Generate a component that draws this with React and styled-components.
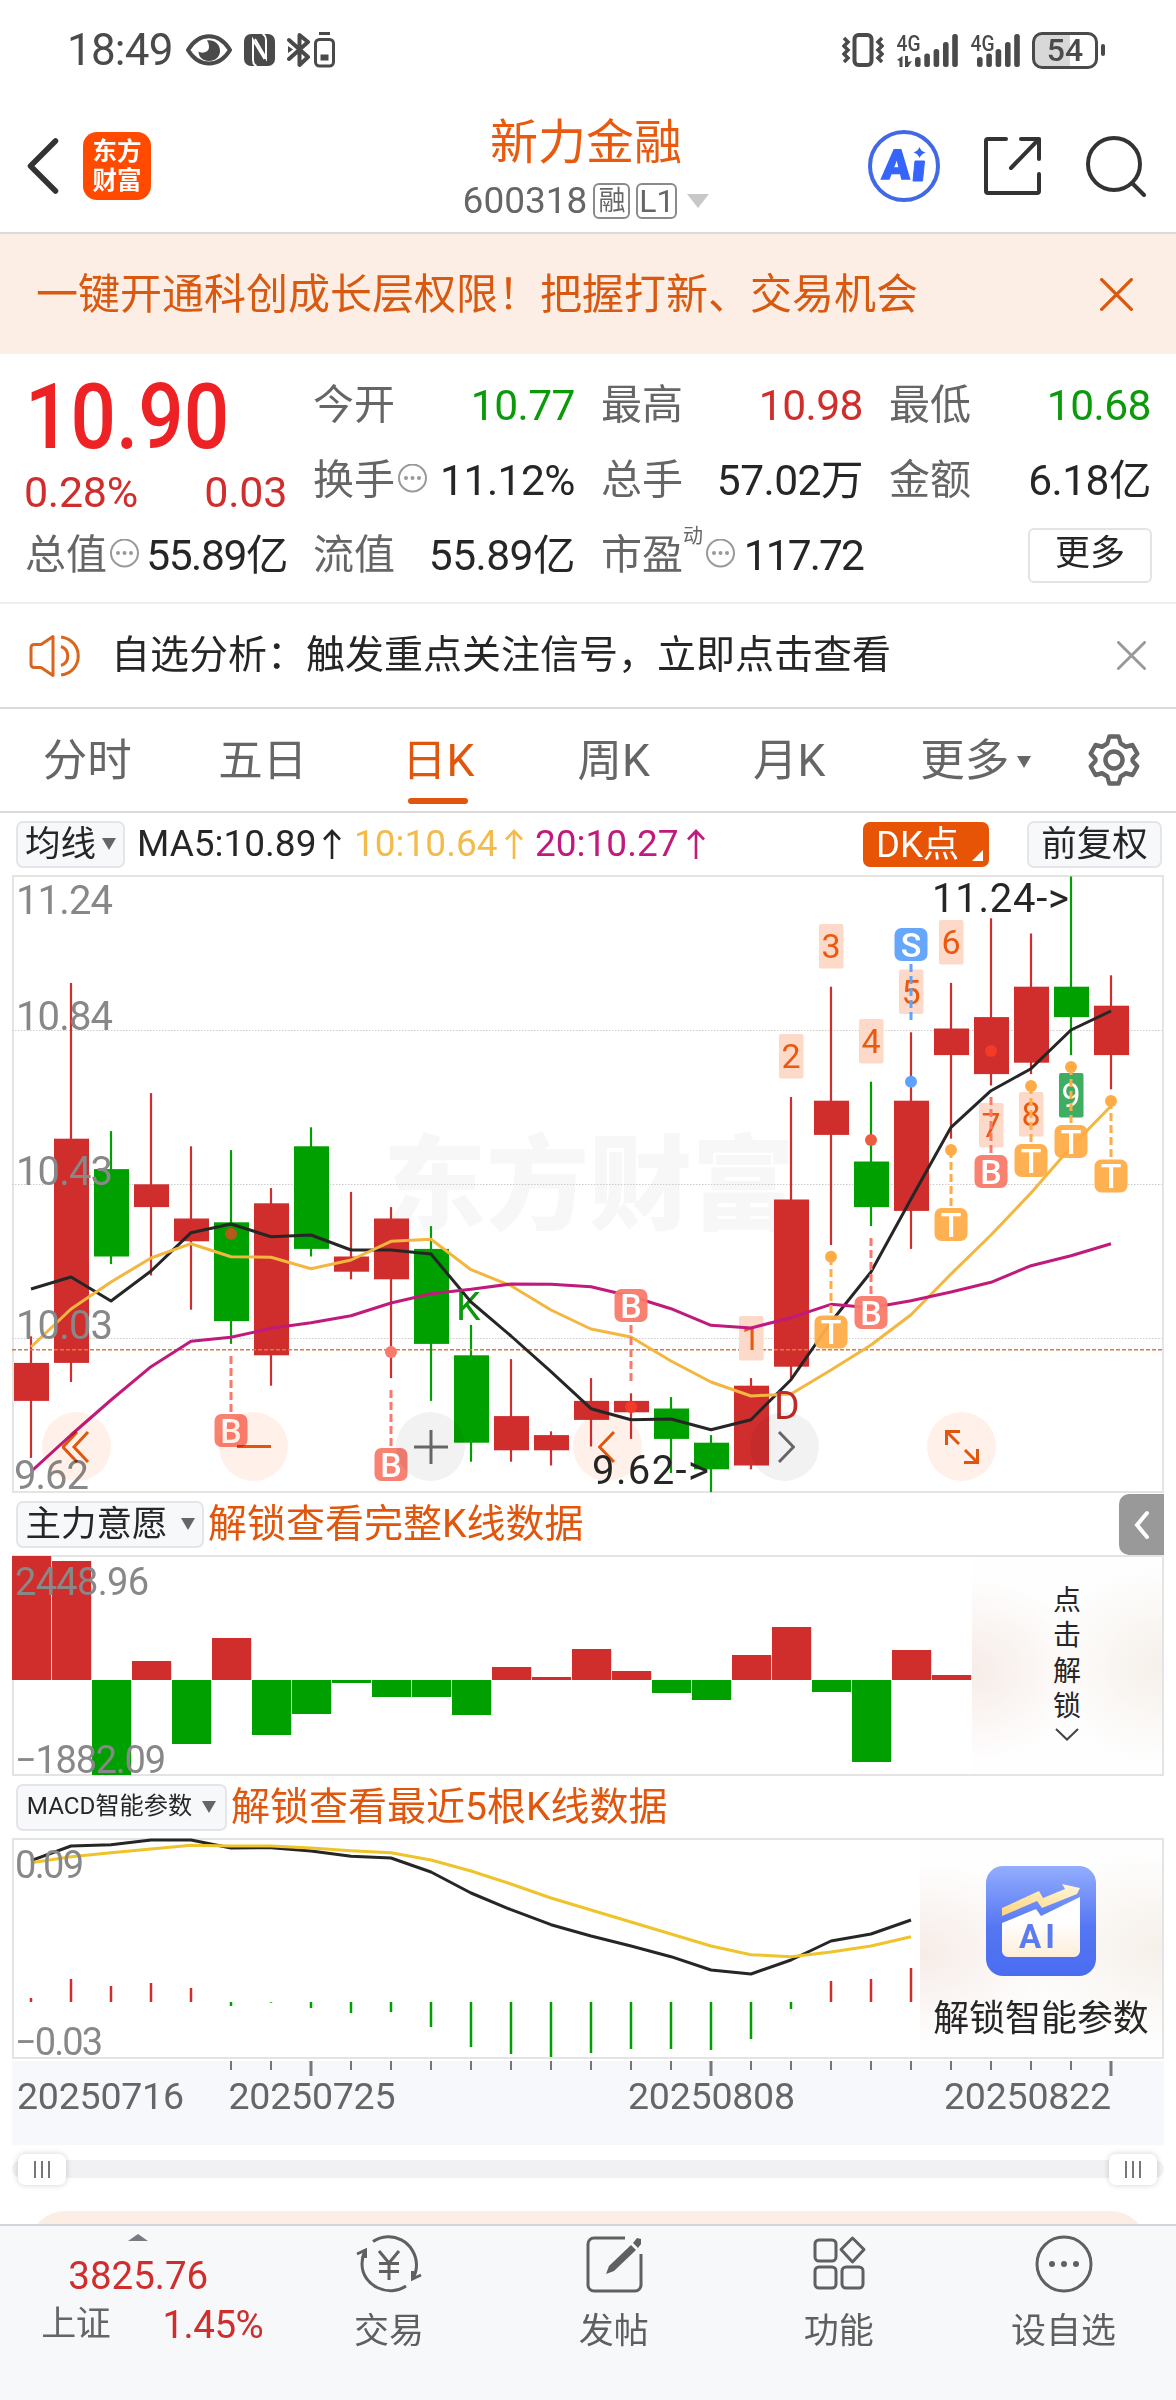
import React from 'react';
import styled, { createGlobalStyle } from 'styled-components';

const RED = '#d02d2d';
const GREEN = '#00a000';
const ORANGE = '#e0560c';

const GlobalStyle = createGlobalStyle`
  * {
    box-sizing: border-box;
  }

  body {
    margin: 0;
    background: #fff;
    color: #262626;
    font-family: Roboto, 'Noto Sans CJK SC', sans-serif;
    line-height: 1.2;
  }

  svg {
    display: block;
    flex: none;
  }
`;

const Page = styled.div`
  width: 1176px;
  height: 2400px;
  overflow: hidden;
  background: #fff;
`;

/* status bar */

const StatusBar = styled.div`
  height: 100px;
  padding: 0 71px 0 67px;
  display: flex;
  align-items: center;
  justify-content: space-between;
  color: #4a4a4a;
`;

const StatusGroup = styled.div`
  display: flex;
  align-items: center;
  gap: ${({ $gap }) => $gap}px;
`;

const Clock = styled.span`
  font-size: 44px;
  letter-spacing: -0.8px;
  margin-right: 1px;
`;

const Battery = styled.div`
  width: 66px;
  height: 37px;
  border: 3px solid #4a4a4a;
  border-radius: 10px;
  background: linear-gradient(90deg, #d8d8d8 58%, #fff 58%);
  display: flex;
  align-items: center;
  justify-content: center;
  font-size: 32px;
  font-weight: 500;
  line-height: 1;
`;

/* header */

const Header = styled.header`
  height: 134px;
  padding: 0 30px 0 26px;
  border-bottom: 2px solid #dadada;
  display: grid;
  grid-template-columns: 1fr auto 1fr;
  align-items: center;
`;

const HeaderSide = styled.div`
  display: flex;
  align-items: center;
  gap: ${({ $gap }) => $gap}px;
  justify-content: ${({ $end }) => ($end ? 'flex-end' : 'flex-start')};
`;

const Logo = styled.div`
  width: 68px;
  height: 68px;
  border-radius: 14px;
  background: #ff4a00;
  color: #fff;
  font-size: 24.5px;
  font-weight: 700;
  line-height: 29px;
  text-align: center;
  padding-top: 5px;
`;

const StockTitle = styled.div`
  padding-top: 10px;
  display: flex;
  flex-direction: column;
  align-items: center;
`;

const StockName = styled.h1`
  margin: 0;
  font-size: 48px;
  font-weight: 400;
  line-height: 60px;
  color: #ea5a0e;
`;

const StockCode = styled.div`
  display: flex;
  align-items: center;
  gap: 6px;
  height: 56px;
  font-size: 37px;
  color: #666;
`;

const Tag = styled.span`
  height: 36px;
  width: ${({ $w }) => $w}px;
  border: 2px solid #8a8a8a;
  border-radius: 6px;
  font-size: ${({ $size }) => $size}px;
  line-height: 32px;
  text-align: center;
`;

const Caret = styled.span`
  width: 0;
  height: 0;
  border-left: ${({ $w }) => $w / 2}px solid transparent;
  border-right: ${({ $w }) => $w / 2}px solid transparent;
  border-top: ${({ $h }) => $h}px solid ${({ $color }) => $color || '#666'};
`;

/* promotion */

const Banner = styled.div`
  height: 120px;
  padding: 0 43px 0 36px;
  background: #fceee5;
  color: #d8590f;
  font-size: 42px;
  display: flex;
  align-items: center;
  justify-content: space-between;

  span {
    padding-top: 2px;
  }
`;

/* quote */

const Quote = styled.section`
  height: 250px;
  padding: 14px 25px 0;
  border-bottom: 2px solid #eee;
  display: grid;
  grid-template-columns: repeat(4, 262px);
  grid-template-rows: repeat(3, 75px);
  column-gap: 26px;
`;

const PriceBox = styled.div`
  grid-row: span 2;
  padding-top: 1px;
  color: ${RED};
  display: flex;
  flex-direction: column;
`;

const Price = styled.div`
  height: 97px;
  line-height: 98px;
  font-size: 90px;
  font-weight: 500;
  color: #ee2224;
  transform: scaleX(0.89);
  transform-origin: 0 50%;
`;

const Changes = styled.div`
  display: flex;
  justify-content: space-between;
  font-size: 43px;
  line-height: 52px;
  letter-spacing: -0.3px;
  margin-left: -1px;
`;

const Stat = styled.div`
  display: flex;
  align-items: center;
  white-space: nowrap;
  font-size: 41px;
`;

const StatLabel = styled.span`
  color: #666;
`;

const Sup = styled.sup`
  align-self: flex-start;
  font-size: 20px;
  line-height: 20px;
  margin-top: 8px;
  color: #666;
`;

const StatValue = styled.span`
  margin-left: auto;
  font-size: 42.5px;
  letter-spacing: ${({ $spacing }) => $spacing || -0.5}px;
  color: ${({ $color }) => $color || '#262626'};
`;

const MoreButton = styled.button`
  margin-left: auto;
  margin-right: -1px;
  width: 124px;
  height: 55px;
  padding: 0 0 4px;
  border: 2px solid #e4e4e4;
  border-radius: 6px;
  background: #fff;
  color: #262626;
  font: inherit;
  font-size: 35px;
  line-height: 1;
`;

/* watchlist analysis */

const Notice = styled.div`
  height: 105px;
  padding: 0 30px 0 29px;
  border-bottom: 2px solid #dadada;
  display: flex;
  align-items: center;
  font-size: 39px;

  span {
    margin-left: 30px;
    flex: 1;
  }
`;

/* tabs */

const Tabs = styled.nav`
  height: 104px;
  border-bottom: 2px solid #dadada;
  display: flex;
  align-items: stretch;
`;

const Tab = styled.div`
  width: 175.5px;
  display: flex;
  align-items: center;
  justify-content: center;
  gap: 8px;
  font-size: 44.5px;
  color: ${({ $active }) => ($active ? ORANGE : '#666')};
  position: relative;
  padding-top: 3px;
  padding-left: ${({ $indent }) => $indent || 0}px;
  padding-right: ${({ $indent }) => ($indent ? 0 : 1)}px;

  &::after {
    content: '';
    display: ${({ $active }) => ($active ? 'block' : 'none')};
    position: absolute;
    bottom: 7px;
    width: 60px;
    height: 6px;
    border-radius: 3px;
    background: ${ORANGE};
  }
`;

const Settings = styled.div`
  display: flex;
  align-items: center;
  margin-left: 35px;
`;

/* indicator rows */

const IndicatorRow = styled.div`
  height: 62px;
  padding: 0 14px 0 16px;
  display: flex;
  align-items: center;
  position: relative;
`;

const Chip = styled.div`
  height: 47px;
  width: ${({ $w }) => $w}px;
  border: 2px solid #e3e5ea;
  border-radius: 7px;
  background: #f7f8fa;
  display: flex;
  align-items: center;
  justify-content: center;
  gap: ${({ $gap }) => $gap || 0}px;
  font-size: ${({ $size }) => $size || 35.5}px;
  white-space: nowrap;
`;

const MaText = styled.span`
  margin-left: ${({ $left }) => $left}px;
  width: ${({ $w }) => $w}px;
  color: ${({ $color }) => $color};
  font-size: 37px;
  white-space: nowrap;
  display: flex;
  align-items: center;
  justify-content: space-between;
`;

const DkButton = styled.div`
  margin-left: auto;
  margin-right: 38px;
  width: 126px;
  height: 45px;
  padding: 0 6px 6px 13px;
  border-radius: 7px;
  background: #e85405;
  color: #fff;
  font-size: 36.5px;
  line-height: 42px;
  display: flex;
  align-items: flex-end;
  justify-content: space-between;

  span {
    height: 37px;
  }
`;

const Corner = styled.i`
  width: 0;
  height: 0;
  border-left: 11px solid transparent;
  border-bottom: 11px solid #fff;
`;

const UnlockText = styled.span`
  margin-left: 4px;
  color: #e0560c;
  font-size: 39px;
  white-space: nowrap;
`;

const SideHandle = styled.div`
  position: absolute;
  right: 12px;
  top: 1px;
  width: 45px;
  height: 61px;
  border-radius: 10px 0 0 10px;
  background: #999;
  display: flex;
  align-items: center;
  justify-content: center;
`;

/* charts */

const ChartBox = styled.div`
  position: relative;
  height: ${({ $height }) => $height}px;
  margin: 0 12px;
  border: 2px solid #e4e4e4;

  > svg {
    margin: -2px;
    overflow: visible;
  }
`;

const ChartTools = styled.div`
  position: absolute;
  left: 28px;
  bottom: 10px;
  display: flex;
  gap: 108px;
  mix-blend-mode: multiply;
`;

const RoundButton = styled.div`
  width: 69px;
  height: 69px;
  border-radius: 50%;
  background: ${({ $gray }) => ($gray ? '#f2f2f2' : '#fff1ea')};
  display: flex;
  align-items: center;
  justify-content: center;
`;

const UnlockPanel = styled.div`
  position: absolute;
  top: 0;
  right: 0;
  bottom: 0;
  width: ${({ $w }) => $w}px;
  background:
    radial-gradient(ellipse 60% 42% at 0 52%, rgba(246, 234, 229, 0.9), rgba(255, 255, 255, 0) 100%),
    radial-gradient(ellipse 60% 45% at 100% 50%, rgba(244, 236, 228, 0.8), rgba(255, 255, 255, 0) 100%),
    #fefefe;
  display: flex;
  flex-direction: column;
  align-items: center;
`;

const VerticalText = styled.div`
  width: 28px;
  margin: 26px 0 4px;
  font-size: 28px;
  line-height: 35.3px;
  text-align: center;
`;

const PanelCaption = styled.div`
  margin-top: 18px;
  font-size: 35.9px;
  line-height: 50px;
  white-space: nowrap;
`;

const AiTile = styled.div`
  margin-top: 26px;
`;

const AxisBox = styled.div`
  margin: 2px 12px 0;
  height: 84px;
  background: #f7f8fb;
`;

/* range slider */

const Slider = styled.div`
  margin: 15px 12px 0;
  height: 18px;
  border-radius: 9px;
  background: #f1f1f3;
  padding: 0 7px 0 6px;
  display: flex;
  align-items: center;
  justify-content: space-between;
`;

const Handle = styled.div`
  width: 48px;
  height: 31px;
  border-radius: 7px;
  background: #fff;
  box-shadow: 0 0 6px rgba(0, 0, 0, 0.18);
  display: flex;
  align-items: center;
  justify-content: center;
  gap: 5px;

  i {
    width: 2px;
    height: 17px;
    background: #777;
  }
`;

const NextCard = styled.div`
  height: 13px;
  margin: 33px 29px 0;
  overflow: hidden;

  &::before {
    content: '';
    display: block;
    height: 80px;
    border-radius: 36px;
    background: #fceee5;
  }
`;

/* bottom bar */

const BottomBar = styled.footer`
  height: 176px;
  border-top: 2px solid #d3d5dc;
  background: #f7f8fa;
  display: flex;
`;

const IndexBox = styled.div`
  width: 277px;
  padding-top: 8px;
  display: flex;
  flex-direction: column;
  align-items: center;
  color: ${RED};
  font-size: 38.5px;
`;

const UpCaret = styled.i`
  border-left: 10px solid transparent;
  border-right: 10px solid transparent;
  border-bottom: 7px solid #7a7a80;
`;

const IndexValue = styled.div`
  margin-top: 13px;
  line-height: 44px;
`;

const IndexRow = styled.div`
  width: 222px;
  margin-top: 4px;
  margin-left: 28px;
  display: flex;
  align-items: center;
  justify-content: space-between;
  letter-spacing: -0.5px;

  span {
    color: #666;
    font-size: 35px;
  }
`;

const NavItem = styled.div`
  width: 225.3px;
  padding-top: 8px;
  display: flex;
  flex-direction: column;
  align-items: center;
  color: #5f5f5f;
  font-size: 35px;
  line-height: 50px;

  &:first-of-type {
    margin-left: -2px;
  }

  svg {
    margin-bottom: 13px;
  }
`;

const CloseIcon = ({ size, color, width = 3 }) => (
  <svg width={size} height={size} viewBox="0 0 30 30" stroke={color} strokeWidth={width} strokeLinecap="round">
    <path d="M1.5 1.5L28.5 28.5M28.5 1.5L1.5 28.5" />
  </svg>
);

const InfoIcon = () => (
  <svg width="32" height="34" viewBox="0 0 32 34" fill="none" stroke="#999" strokeWidth="2">
    <circle cx="17.5" cy="14" r="13.5" />
    <g fill="#999" stroke="none">
      <circle cx="11" cy="14" r="2" />
      <circle cx="17.5" cy="14" r="2" />
      <circle cx="24" cy="14" r="2" />
    </g>
  </svg>
);

const ArrowUp = () => (
  <svg width="18" height="30" viewBox="0 0 18 30" fill="none" stroke="currentColor" strokeWidth="2.6">
    <path d="M9 30V2M1 10.5L9 2l8 8.5" />
  </svg>
);

const SignalIcon = ({ arrows }) => (
  <svg width={arrows ? 62 : 50} height="46" viewBox={arrows ? '0 -5 62 46' : '12 -5 50 46'} fill="#4a4a4a">
    <text
      x={arrows ? 0.5 : 12.5}
      y="19"
      fontFamily="Roboto"
      fontWeight="500"
      fontSize="22.5"
      textLength="24"
      lengthAdjust="spacingAndGlyphs"
    >
      4G
    </text>
    {arrows && (
      <path d="M1 28L6.5 24v11H3.5v-6zM9 24h3v6l4-1-4 6H9z" />
    )}
    <rect x="19" y="25" width="5.6" height="10" rx="2.5" />
    <rect x="28.3" y="21.5" width="5.6" height="13.5" rx="2.5" />
    <rect x="37.6" y="17" width="5.6" height="18" rx="2.5" />
    <rect x="47" y="10" width="5.6" height="25" rx="2.5" />
    <rect x="56.2" y="2" width="5.6" height="33" rx="2.5" />
  </svg>
);

const Status = () => (
  <StatusBar>
    <StatusGroup $gap={12}>
      <Clock>18:49</Clock>
      <svg width="46" height="34" viewBox="0 0 46 34">
        <path d="M2 17C8 7 15 3.2 23 3.2S38 7 44 17C38 27 31 30.5 23 30.5S8 27 2 17z" fill="none" stroke="#4a4a4a" strokeWidth="4" />
        <path d="M21 7.5c7-1 13 3.5 13 10.5C34 24 29 28 23 28s-10.5-4-10.5-9.5c3 2.5 11 1 10.5-5-.2-3-1-4.5-2-6z" fill="#4a4a4a" />
      </svg>
      <svg width="31" height="32" viewBox="0 0 31 32">
        <rect width="31" height="32" rx="7" fill="#4a4a4a" />
        <path d="M12.5 32c-2.5-1-3.5-3-3.5-6V6l11.5 19M18.5 0c2.5 1 3.5 3 3.5 6v18L11 5" fill="none" stroke="#fff" strokeWidth="2" />
      </svg>
      <svg width="48" height="36" viewBox="0 0 48 36" fill="none" stroke="#4a4a4a" strokeWidth="4">
        <path d="M2 8l19 17-8.5 8V3L21 10 2 27" strokeLinejoin="round" strokeLinecap="round" />
        <path d="M1 14l5 3.5-5 3.5z" fill="#4a4a4a" stroke="none" />
        <rect x="28.5" y="7.5" width="18" height="26.5" rx="4" strokeWidth="3" />
        <path d="M32 1.5h11" strokeWidth="3" />
        <rect x="33.5" y="22.5" width="8" height="6" fill="#4a4a4a" stroke="none" />
      </svg>
    </StatusGroup>
    <StatusGroup $gap={12}>
      <svg width="42" height="36" viewBox="0 0 42 36" fill="none" stroke="#4a4a4a" strokeWidth="4">
        <rect x="12.5" y="3" width="17" height="30" rx="4" />
        <path d="M2 6l4 4-4 4 4 4-4 4 4 4-4 4M40 6l-4 4 4 4-4 4 4 4-4 4 4 4" strokeWidth="3.5" />
      </svg>
      <SignalIcon arrows />
      <SignalIcon />
      <StatusGroup $gap={3}>
        <Battery>54</Battery>
        <svg width="4" height="12" viewBox="0 0 4 12">
          <rect width="4" height="12" rx="2" fill="#4a4a4a" />
        </svg>
      </StatusGroup>
    </StatusGroup>
  </StatusBar>
);

const TopHeader = () => (
  <Header>
    <HeaderSide $gap={24}>
      <svg width="33" height="56" viewBox="0 0 33 56" fill="none" stroke="#333" strokeWidth="5.5" strokeLinecap="round" strokeLinejoin="round">
        <path d="M29.5 3L4.5 28l25 25" />
      </svg>
      <Logo>
        东方
        <br />
        财富
      </Logo>
    </HeaderSide>
    <StockTitle>
      <StockName>新力金融</StockName>
      <StockCode>
        600318
        <Tag $size={27} $w={37}>融</Tag>
        <Tag $size={32} $w={41}>L1</Tag>
        <Caret $w={22} $h={14} $color="#c8c8c8" style={{ marginLeft: 4 }} />
      </StockCode>
    </StockTitle>
    <HeaderSide $end $gap={43}>
      <svg width="72" height="72" viewBox="0 0 72 72">
        <circle cx="36" cy="36" r="34" fill="none" stroke="#4169e6" strokeWidth="4" />
        <text x="14" y="49" fontFamily="Roboto" fontSize="41" fontWeight="900" fill="#3565fa" stroke="#3565fa" strokeWidth="1.5" transform="skewX(-4) translate(3 0)">
          A
        </text>
        <path d="M47 31h9.5l-2 20h-9.5z" fill="#3565fa" stroke="#3565fa" strokeLinejoin="round" />
        <path d="M51.5 17q1.5 4.5 6 5.5-4.5 1.5-6 5.5-1.5-4.5-6-5.5 4.5-1.5 6-5.5z" fill="#3565fa" />
      </svg>
      <svg width="60" height="60" viewBox="0 0 60 60" fill="none" stroke="#333" strokeWidth="4" strokeLinecap="round" strokeLinejoin="round">
        <path d="M23 3H5a2 2 0 0 0-2 2v50a2 2 0 0 0 2 2h49a2 2 0 0 0 2-2V38M38 3h18v20M56 3L28 32" />
      </svg>
      <svg width="60" height="62" viewBox="0 0 60 62" fill="none" stroke="#333" strokeWidth="4" strokeLinecap="round">
        <circle cx="28" cy="29" r="26" />
        <path d="M46 48l12 12" />
      </svg>
    </HeaderSide>
  </Header>
);

const QuotePanel = () => (
  <Quote>
    <PriceBox>
      <Price>10.90</Price>
      <Changes>
        <span>0.28%</span>
        <span>0.03</span>
      </Changes>
    </PriceBox>
    <Stat>
      <StatLabel>今开</StatLabel>
      <StatValue $color="#0a9a0a">10.77</StatValue>
    </Stat>
    <Stat>
      <StatLabel>最高</StatLabel>
      <StatValue $color={RED}>10.98</StatValue>
    </Stat>
    <Stat>
      <StatLabel>最低</StatLabel>
      <StatValue $color="#0a9a0a">10.68</StatValue>
    </Stat>
    <Stat>
      <StatLabel>换手</StatLabel>
      <InfoIcon />
      <StatValue>11.12%</StatValue>
    </Stat>
    <Stat>
      <StatLabel>总手</StatLabel>
      <StatValue>57.02万</StatValue>
    </Stat>
    <Stat>
      <StatLabel>金额</StatLabel>
      <StatValue>6.18亿</StatValue>
    </Stat>
    <Stat>
      <StatLabel>总值</StatLabel>
      <InfoIcon />
      <StatValue $spacing={-1.4}>55.89亿</StatValue>
    </Stat>
    <Stat>
      <StatLabel>流值</StatLabel>
      <StatValue>55.89亿</StatValue>
    </Stat>
    <Stat>
      <StatLabel>市盈</StatLabel>
      <Sup>动</Sup>
      <InfoIcon />
      <StatValue $spacing={-1.9}>117.72</StatValue>
    </Stat>
    <Stat>
      <MoreButton>更多</MoreButton>
    </Stat>
  </Quote>
);

/* [up, top of body, bottom of body, high, low] */
const candles = [
  [1, 9.96, 9.86, 10.03, 9.71],
  [1, 10.55, 9.96, 10.96, 9.91],
  [0, 10.47, 10.24, 10.57, 10.22],
  [1, 10.43, 10.37, 10.67, 10.19],
  [1, 10.34, 10.28, 10.53, 10.1],
  [0, 10.33, 10.07, 10.52, 10.01],
  [1, 10.38, 9.98, 10.42, 9.9],
  [0, 10.53, 10.26, 10.58, 10.24],
  [1, 10.24, 10.2, 10.41, 10.18],
  [1, 10.34, 10.18, 10.37, 9.92],
  [0, 10.26, 10.01, 10.32, 9.86],
  [0, 9.98, 9.75, 10.06, 9.7],
  [1, 9.82, 9.73, 9.97, 9.7],
  [1, 9.77, 9.73, 9.78, 9.69],
  [1, 9.86, 9.81, 9.92, 9.74],
  [1, 9.86, 9.83, 9.88, 9.76],
  [0, 9.84, 9.76, 9.87, 9.67],
  [0, 9.75, 9.68, 9.77, 9.62],
  [1, 9.9, 9.69, 9.92, 9.68],
  [1, 10.39, 9.95, 10.66, 9.92],
  [1, 10.65, 10.56, 10.95, 10.27],
  [0, 10.49, 10.37, 10.7, 10.32],
  [1, 10.65, 10.36, 10.83, 10.26],
  [1, 10.84, 10.77, 10.96, 10.55],
  [1, 10.87, 10.72, 11.13, 10.69],
  [1, 10.95, 10.75, 11.09, 10.72],
  [0, 10.95, 10.87, 11.24, 10.77],
  [1, 10.9, 10.77, 10.98, 10.68],
];

const ma5 = [
  413, 401, 425, 395, 356.7, 348, 360.7, 359, 374, 374, 378, 426, 460, 495.7, 532.7, 543.7, 543, 553.7, 543.7,
  503.7, 446, 396, 323, 251.3, 214.7, 192.7, 154, 135,
];
const ma10 = [
  471, 433, 406, 382, 367.7, 380.7, 381.3, 392.7, 384, 365.3, 363.3, 393.7, 409.7, 434, 453, 461, 485, 506, 520,
  518, 494, 469, 438.7, 398, 359, 317, 271, 230,
];
const ma20 = [
  595.7, 559, 524, 490.7, 465.3, 461.3, 452.3, 446.7, 439.7, 427, 417.7, 413.3, 408, 408.3, 410.7, 420.3, 432.7,
  449.3, 452, 441.7, 428.3, 431.7, 424.7, 416, 406.3, 389.7, 379.7, 367.7,
];

const signalColors = { B: '#f97a6a', T: '#ffac47', S: '#5fa2fb' };

/* day index, letter, badge top, dashed line from/to, dot */
const signals = [
  { i: 5, type: 'B', top: 538, line: [480, 537], dot: 357.7, dotColor: '#b55a1c' },
  { i: 9, type: 'B', top: 572, line: [514, 571], dot: 476 },
  { i: 15, type: 'B', top: 413, line: [449, 506], dot: 531, dotColor: '#f43a28' },
  { i: 20, type: 'T', top: 439.5, line: [381, 438], dot: 380.7 },
  { i: 21, type: 'B', top: 420, line: [362, 419], dot: 264, dotColor: '#ee5a42' },
  { i: 22, type: 'S', top: 52, line: [88, 145], dot: 205.7 },
  { i: 23, type: 'T', top: 332, line: [274, 331], dot: 274 },
  { i: 24, type: 'B', top: 279, line: [221, 278], dot: 175, dotColor: '#f43a28' },
  { i: 25, type: 'T', top: 268, line: [210, 267], dot: 210 },
  { i: 26, type: 'T', top: 249, line: [191, 248], dot: 191 },
  { i: 27, type: 'T', top: 283.5, line: [225, 282], dot: 225 },
];

const counts = [
  [18, 1, 440],
  [19, 2, 158],
  [20, 3, 48],
  [21, 4, 143],
  [22, 5, 93.5],
  [23, 6, 44],
  [24, 7, 227],
  [25, 8, 216],
  [26, 9, 197],
];

const cx = (i) => 19 + i * 40;
const priceY = (p) => 0.5 + (11.24 - p) * 380;
const toPoints = (values) => values.map((v, i) => `${cx(i)},${v}`).join(' ');

const ChartLabel = styled.text`
  font-family: Roboto, sans-serif;
  font-size: ${({ $size }) => $size || 38}px;
  fill: ${({ $fill }) => $fill || '#888'};
`;

const KLine = () => (
  <ChartBox $height={618}>
    <svg width="1152" height="618" viewBox="0 -1 1152 618">
      <text x="371" y="346" fontFamily="Noto Sans CJK SC" fontWeight="900" fontSize="103" fill="#f7f7f7" textLength="412">
        东方财富
      </text>
      {[154.5, 308.5, 462.5].map((y) => (
        <path key={y} d={`M0 ${y}H1150`} stroke="#ccc" strokeDasharray="1.5 1.5" />
      ))}
      {candles.map(([up, top, bottom, high, low], i) => (
        <g key={i} fill={up ? RED : GREEN} stroke={up ? RED : GREEN}>
          <path d={`M${cx(i)} ${priceY(high)}V${priceY(low)}`} strokeWidth="2.2" />
          <rect x={cx(i) - 17} y={priceY(top)} width="35" height={priceY(bottom) - priceY(top)} stroke="none" />
        </g>
      ))}
      <path d="M0 473.7H1150" stroke="#d97a45" strokeWidth="1.5" strokeDasharray="4 2" />
      {counts.map(([i, n, top]) => (
        <g key={n}>
          <rect x={cx(i) - 12} y={top} width="24.5" height="44.5" rx="2" fill={n === 9 ? '#3fae62' : '#fdd9ca'} />
          <ChartLabel x={cx(i)} y={top + 34} $size={34} $fill={n === 9 ? '#fff' : '#ea5a0e'} textAnchor="middle">
            {n}
          </ChartLabel>
        </g>
      ))}
      <ChartLabel x="444" y="444" $size={39} $fill="#0a9a0a">K</ChartLabel>
      <g fill="none" strokeWidth="3" strokeLinejoin="round">
        <polyline points={toPoints(ma5)} stroke="#262626" />
        <polyline points={toPoints(ma10)} stroke="#f3b63f" />
        <polyline points={toPoints(ma20)} stroke="#c01a7c" />
      </g>
      <ChartLabel x="762" y="543" $size={39} $fill="#c02a2a">D</ChartLabel>
      {signals.map(({ i, type, top, line, dot, dotColor }) => (
        <g key={i}>
          <path
            d={`M${cx(i)} ${line[0]}V${line[1]}`}
            stroke={signalColors[type]}
            strokeWidth="3"
            strokeDasharray="8 4"
          />
          <circle cx={cx(i)} cy={dot} r="6" fill={dotColor || signalColors[type]} />
          <rect x={cx(i) - 16.5} y={top} width="33" height="33" rx="7" fill={signalColors[type]} fillOpacity="0.95" />
          <ChartLabel x={cx(i)} y={top + 28.5} $size={34} $fill="#fff" fontWeight="500" textAnchor="middle">
            {type}
          </ChartLabel>
        </g>
      ))}
      {[
        ['11.24', 38],
        ['10.84', 154],
        ['10.43', 309],
        ['10.03', 463],
      ].map(([label, y]) => (
        <ChartLabel key={label} x="4" y={y} $size={40} textLength="97">
          {label}
        </ChartLabel>
      ))}
      <ChartLabel x="2" y="613" $size={40} textLength="75">9.62</ChartLabel>
      <ChartLabel x="920" y="36" $size={40} $fill="#262626" textLength="137">11.24-&gt;</ChartLabel>
      <ChartLabel x="580" y="608" $size={40} $fill="#262626" textLength="117">9.62-&gt;</ChartLabel>
    </svg>
    <ChartTools>
      <RoundButton>
        <svg width="30" height="34" viewBox="0 0 30 34" fill="none" stroke={ORANGE} strokeWidth="3">
          <path d="M15 2L1 17l14 15M26 2L12 17l14 15" />
        </svg>
      </RoundButton>
      <RoundButton>
        <svg width="34" height="4" viewBox="0 0 34 4">
          <rect width="34" height="3" fill={ORANGE} />
        </svg>
      </RoundButton>
      <RoundButton $gray>
        <svg width="34" height="34" viewBox="0 0 34 34" stroke="#666" strokeWidth="3">
          <path d="M0 17h34M17 0v34" />
        </svg>
      </RoundButton>
      <RoundButton>
        <svg width="20" height="34" viewBox="0 0 20 34" fill="none" stroke={ORANGE} strokeWidth="3">
          <path d="M16 2L1.5 17 16 32" />
        </svg>
      </RoundButton>
      <RoundButton $gray>
        <svg width="20" height="34" viewBox="0 0 20 34" fill="none" stroke="#666" strokeWidth="3">
          <path d="M4 2l14.5 15L4 32" />
        </svg>
      </RoundButton>
      <RoundButton>
        <svg width="34" height="34" viewBox="0 0 34 34" fill="none" stroke={ORANGE} strokeWidth="3">
          <path d="M1.5 15V1.5H15M1.5 1.5L14 14M32.5 19v13.5H19M32.5 32.5L20 20" />
        </svg>
      </RoundButton>
    </ChartTools>
  </ChartBox>
);

/* bar heights, positive above the axis */
const forceBars = [
  124, 119, -95, 19, -64, 42, -55, -34, -3, -17, -17, -35, 13, 3, 31, 9, -13, -20, 25, 53, -12, -82, 30, 5,
];

const ForceChart = () => (
  <ChartBox $height={221}>
    <svg width="1152" height="221" viewBox="0 0 1152 221">
      {forceBars.map((v, i) => (
        <rect
          key={i}
          x={i * 40}
          y={v > 0 ? 125 - v : 125}
          width="39.2"
          height={Math.abs(v)}
          fill={v > 0 ? RED : GREEN}
        />
      ))}
      <ChartLabel x="3" y="39.5" textLength="134">2448.96</ChartLabel>
      <ChartLabel x="3" y="218" textLength="151">−1882.09</ChartLabel>
    </svg>
    <UnlockPanel $w={190}>
      <VerticalText>点击解锁</VerticalText>
      <svg width="24" height="13" viewBox="0 0 24 13" fill="none" stroke="#444" strokeWidth="2">
        <path d="M1 1l11 10.5L23 1" />
      </svg>
    </UnlockPanel>
  </ChartBox>
);

const dif = [
  22.7, 8, 6.7, 2, 2, 10, 9.7, 13, 18.3, 20, 34, 55, 71.7, 86.7, 98, 108, 118.7, 132, 136, 122, 103, 96, 82,
];
const dea = [
  24.7, 18.7, 14.7, 11, 7.3, 8, 8, 10, 12.7, 14.7, 22, 33, 46, 60, 72, 84, 96, 108, 116.7, 118.7, 114, 108, 98.7,
];
const macd = [
  -4, -23, -16, -19, -14, 4, 0.7, 6, 11, 10, 25, 45, 52, 55, 51, 47, 47, 48, 37, 7, -21, -23, -34,
];

const MacdChart = () => (
  <ChartBox $height={221}>
    <svg width="1152" height="221" viewBox="0 0 1152 221">
      {macd.map((v, i) => (
        <path key={i} d={`M${cx(i)} 164v${v}`} stroke={v < 0 ? RED : GREEN} strokeWidth="2.5" />
      ))}
      <g fill="none" strokeWidth="3" strokeLinejoin="round">
        <polyline points={toPoints(dif)} stroke="#262626" />
        <polyline points={toPoints(dea)} stroke="#efc32a" />
      </g>
      <ChartLabel x="3" y="39.5" textLength="69">0.09</ChartLabel>
      <ChartLabel x="3" y="216.5" textLength="88">−0.03</ChartLabel>
    </svg>
    <UnlockPanel $w={242}>
      <AiTile>
        <svg width="110" height="110" viewBox="0 0 110 110">
          <defs>
            <linearGradient id="tile" x1="0" y1="0" x2="0" y2="1">
              <stop offset="0" stopColor="#93adfd" />
              <stop offset="0.55" stopColor="#5577f3" />
              <stop offset="1" stopColor="#4a6cf0" />
            </linearGradient>
            <linearGradient id="sheet" x1="0" y1="0" x2="0" y2="1">
              <stop offset="0.4" stopColor="#fff" />
              <stop offset="1" stopColor="#fdeeda" />
            </linearGradient>
            <linearGradient id="trend" x1="0" y1="1" x2="1" y2="0">
              <stop offset="0" stopColor="#ffd57a" />
              <stop offset="1" stopColor="#fff6dd" />
            </linearGradient>
          </defs>
          <rect width="110" height="110" rx="17" fill="url(#tile)" />
          <path d="M16 57l34-14 5 7 39-19v54a6 6 0 0 1-6 6H22a6 6 0 0 1-6-6z" fill="url(#sheet)" />
          <path d="M16 50v-8l37-17 4 7 22-9-3-5 18 4-3 6-35 14-5-7z" fill="url(#trend)" />
          <text x="33" y="82" fontFamily="Roboto" fontWeight="700" fontSize="33" fill="#5b7bf0" letterSpacing="4">
            AI
          </text>
        </svg>
      </AiTile>
      <PanelCaption>解锁智能参数</PanelCaption>
    </UnlockPanel>
  </ChartBox>
);

const dates = [
  ['20250716', 5],
  ['20250725', 216.5],
  ['20250808', 616],
  ['20250822', 932],
];

const DateAxis = () => (
  <AxisBox>
    <svg width="1152" height="84" viewBox="0 0 1152 84">
      {candles.map((_, i) => {
        if (i < 5) return null;
        const major = i % 10 === 7;
        return <path key={i} d={`M${cx(i)} 0v${major ? 15 : 9}`} stroke="#777" strokeWidth={major ? 3 : 2} />;
      })}
      {dates.map(([label, x]) => (
        <ChartLabel key={label} x={x} y="48" $size={37.5} $fill="#666" textLength="167">
          {label}
        </ChartLabel>
      ))}
    </svg>
  </AxisBox>
);

const App = () => {
  return (
    <>
      <GlobalStyle />
      <Page>
        <Status />
        <TopHeader />
        <Banner>
          <span>一键开通科创成长层权限！把握打新、交易机会</span>
          <CloseIcon size={33} color="#d8590f" />
        </Banner>
        <QuotePanel />
        <Notice>
          <svg width="52" height="44" viewBox="0 0 52 44" fill="none" stroke="#d9661f" strokeWidth="3" strokeLinejoin="round">
            <path d="M24 2.5L12 10.5H5a3 3 0 0 0-3 3v17a3 3 0 0 0 3 3h7L24 41.5z" />
            <path d="M32 12.5c9 3 9 16 0 19M32 3c23 3 23 35 0 38" />
          </svg>
          <span>自选分析：触发重点关注信号，立即点击查看</span>
          <CloseIcon size={29} color="#999" />
        </Notice>
        <Tabs>
          <Tab>分时</Tab>
          <Tab>五日</Tab>
          <Tab $active>日K</Tab>
          <Tab>周K</Tab>
          <Tab>月K</Tab>
          <Tab $indent={21}>
            更多
            <Caret $w={14} $h={12} />
          </Tab>
          <Settings>
            <svg width="52" height="52" viewBox="0 0 52 52" fill="none" stroke="#666" strokeWidth="4.5" strokeLinejoin="round">
              <path d="M21 2.5h10l2 7 5.5 3.2 7-1.7 5 8.7-5 5.3v2l5 5.3-5 8.7-7-1.7-5.5 3.2-2 7H21l-2-7-5.5-3.2-7 1.7-5-8.7 5-5.3v-2l-5-5.3 5-8.7 7 1.7L19 9.5z" transform="translate(1.3 0) scale(0.95 1)" />
              <circle cx="26" cy="26" r="8.5" />
            </svg>
          </Settings>
        </Tabs>
        <IndicatorRow>
          <Chip $w={109} $gap={6}>
            均线
            <Caret $w={14} $h={12} />
          </Chip>
          <MaText $left={12} $w={204} $color="#262626">
            MA5:10.89
            <ArrowUp />
          </MaText>
          <MaText $left={13} $w={169} $color="#f3bb4b">
            10:10.64
            <ArrowUp />
          </MaText>
          <MaText $left={12} $w={170} $color="#c01a7c">
            20:10.27
            <ArrowUp />
          </MaText>
          <DkButton>
            <span>DK点</span>
            <Corner />
          </DkButton>
          <Chip $w={135}>前复权</Chip>
        </IndicatorRow>
        <KLine />
        <IndicatorRow>
          <Chip $w={188} $gap={13}>
            主力意愿
            <Caret $w={14} $h={12} />
          </Chip>
          <UnlockText>解锁查看完整K线数据</UnlockText>
          <SideHandle>
            <svg width="16" height="30" viewBox="0 0 16 30" fill="none" stroke="#fff" strokeWidth="4" strokeLinecap="round">
              <path d="M13 3L3 15l10 12" />
            </svg>
          </SideHandle>
        </IndicatorRow>
        <ForceChart />
        <IndicatorRow>
          <Chip $w={211} $size={24.2} $gap={10}>
            MACD智能参数
            <Caret $w={14} $h={12} />
          </Chip>
          <UnlockText>解锁查看最近5根K线数据</UnlockText>
        </IndicatorRow>
        <MacdChart />
        <DateAxis />
        <Slider>
          <Handle>
            <i />
            <i />
            <i />
          </Handle>
          <Handle>
            <i />
            <i />
            <i />
          </Handle>
        </Slider>
        <NextCard />
        <BottomBar>
          <IndexBox>
            <UpCaret />
            <IndexValue>3825.76</IndexValue>
            <IndexRow>
              <span>上证</span>
              1.45%
            </IndexRow>
          </IndexBox>
          <NavItem>
            <svg width="66" height="60" viewBox="0 0 66 60" fill="none" stroke="#606060" strokeWidth="3">
              <path d="M17 7.5C35-5 60 8 60.5 31c0 6-1.5 10-4 14" />
              <path d="M50 52C33 64 6 52 6 30c0-5 1-9.5 3-14" />
              <path d="M1 20l8.5-4v8M65 41l-8.5 4v-8" />
              <path d="M23 17l10 12 10-12M23 29.5h20M23 37.5h20M33 29v17" />
            </svg>
            交易
          </NavItem>
          <NavItem>
            <svg width="60" height="60" viewBox="0 0 60 60" fill="none" stroke="#606060" strokeWidth="3">
              <path d="M41 4H10a6 6 0 0 0-6 6v41a6 6 0 0 0 6 6h41a6 6 0 0 0 6-6V20" />
              <path d="M22 40l3-8L47 11l5 5-22 21z" fill="#606060" stroke="none" />
              <path d="M49 9l4-5 4 1v5l-3 4z" fill="#606060" stroke="none" />
            </svg>
            发帖
          </NavItem>
          <NavItem>
            <svg width="60" height="60" viewBox="0 0 60 60" fill="none" stroke="#606060" strokeWidth="3" strokeLinejoin="round">
              <rect x="6" y="6" width="21" height="21" rx="4" />
              <rect x="6" y="33" width="21" height="21" rx="4" />
              <rect x="33" y="33" width="21" height="21" rx="4" />
              <path d="M43.5 4L55 15.5 43.5 28 32 15.5z" />
            </svg>
            功能
          </NavItem>
          <NavItem>
            <svg width="60" height="60" viewBox="0 0 60 60" fill="none" stroke="#606060" strokeWidth="3">
              <circle cx="30" cy="30" r="27" />
              <g fill="#606060" stroke="none">
                <circle cx="18" cy="30" r="3" />
                <circle cx="30" cy="30" r="3" />
                <circle cx="42" cy="30" r="3" />
              </g>
            </svg>
            设自选
          </NavItem>
        </BottomBar>
      </Page>
    </>
  );
};

export default App;
